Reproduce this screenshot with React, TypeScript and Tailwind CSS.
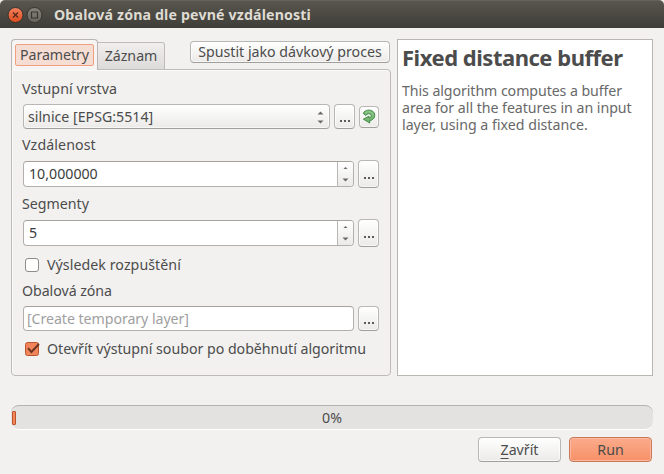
import React from "react";

const raised =
  "box-border rounded-[4px] border border-[#b9b7b3] border-b-[#a19f9b] bg-gradient-to-b from-white to-[#ebeae8] shadow-[inset_0_0_0_1px_rgba(255,255,255,0.6)]";
const field = "box-border rounded-[4px] border border-[#b3b0ab] border-t-[#a5a29d] bg-white";

function Arrow({ down = false, small = false }: { down?: boolean; small?: boolean }) {
  return (
    <svg width="7" height="4" viewBox="0 0 7 4" className="block">
      <path d={down ? "M0.5 0.5h6L3.5 3.5z" : small ? "M1.5 3h4L3.5 1z" : "M0.5 3.5h6L3.5 0.5z"} fill="#6a6865" />
    </svg>
  );
}

function Dots({ tall = false }: { tall?: boolean }) {
  return (
    <button className={`${raised} flex w-[21px] shrink-0 items-end justify-center ${tall ? "h-[28px] pb-[8px]" : "h-[25px] pb-[6px]"}`}>
      <svg width="10" height="2" viewBox="0 0 10 2" fill="#5c5a58">
        <path d="M0 0h2v2H0zM4 0h2v2H4zM8 0h2v2H8z" />
      </svg>
    </button>
  );
}

function Label({ children, className }: { children: React.ReactNode; className: string }) {
  return <div className={`h-[20px] whitespace-nowrap leading-[20px] ${className}`}>{children}</div>;
}

function Spin({ value }: { value: string }) {
  return (
    <div className="flex h-[28px] items-center gap-[4px]">
      <div className={`${field} flex h-[26px] w-[331px] overflow-hidden`}>
        <div className="flex-1 pl-[5px] leading-[23px] text-[#3c3c3c]">{value}</div>
        <div className="flex w-[16px] flex-col items-center justify-between border-l border-[#b9b7b3] bg-gradient-to-b from-white to-[#ebeae8] pt-[4px] pb-[4px]">
          <Arrow small />
          <Arrow down />
        </div>
      </div>
      <Dots tall />
    </div>
  );
}

export default function App() {
  return (
    <div className="flex h-[474px] w-[664px] flex-col overflow-hidden bg-[#f2f1f0] font-['Noto_Sans','Open_Sans',sans-serif] text-[14.2px] text-[#4c4c4c]">
      <header className="flex h-[28px] shrink-0 items-center rounded-t-[5px] border-t border-[#64625a] bg-gradient-to-b from-[#58564e] to-[#3e3d38] pl-[7px]">
        <svg width="36" height="18" viewBox="0 0 36 18" className="shrink-0">
          <defs>
            <linearGradient id="close" x2="0" y2="1">
              <stop stopColor="#f58260" />
              <stop offset="1" stopColor="#df4b1b" />
            </linearGradient>
            <linearGradient id="max" x2="0" y2="1">
              <stop stopColor="#86847b" />
              <stop offset="1" stopColor="#66645c" />
            </linearGradient>
          </defs>
          <circle cx="8.5" cy="9" r="7.5" fill="url(#close)" stroke="#35342f" />
          <path d="M6 6.5l5 5M11 6.5l-5 5" stroke="#54291b" strokeWidth="1.4" />
          <circle cx="27.5" cy="9" r="7.5" fill="url(#max)" stroke="#35342f" />
          <path d="M24.5 6h6v6h-6z" fill="none" stroke="#37362f" strokeWidth="1.2" />
        </svg>
        <h1 className="ml-[11px] whitespace-nowrap text-[14.2px] font-bold tracking-[0.15px] text-[#dfdbd2]">Obalová zóna dle pevné vzdálenosti</h1>
      </header>

      <main className="flex h-[348px] gap-[6px] pt-[11px] pl-[11px]">
        <section className="flex w-[380px] flex-col">
          <div className="z-10 flex h-[31px] items-start">
            <div className="h-[31px] w-[87px] rounded-t-[4px] border border-b-0 border-[#b8b5b2] bg-[#f6f5f4] p-[3px] pt-[4px]">
              <div className="h-[22px] w-[79px] rounded-[2px] border border-[#f0a080] bg-[#f5ddd3] text-center leading-[20px] tracking-[-0.05px] whitespace-nowrap">Parametry</div>
            </div>
            <div className="mt-[3px] h-[28px] w-[67px] rounded-tr-[3px] border border-l-0 border-[#bebbb8] bg-gradient-to-b from-[#f0efed] to-[#dddbd9] text-center leading-[26px]">Záznam</div>
            <button className={`${raised} mt-[2px] ml-[25px] h-[22px] w-[200px] whitespace-nowrap leading-[20px]`}>Spustit jako dávkový proces</button>
          </div>
          <div className="-mt-px flex h-[307px] flex-col rounded-b-[4px] rounded-tr-[4px] border border-[#bebbb8] pt-[9px] pl-[11px] shadow-[inset_1px_1px_0_#fafafa]">
            <Label className="-ml-px tracking-[0.07px]">Vstupní vrstva</Label>
            <div className="mt-[5px] flex h-[25px] items-center gap-[4px]">
              <div className={`${raised} flex h-[25px] w-[307px] items-center justify-between pr-[5px] pl-[4px]`}>
                <span>silnice [EPSG:5514]</span>
                <span className="flex flex-col gap-[5px] pt-[2px]"><Arrow /><Arrow down /></span>
              </div>
              <Dots />
              <button className={`${raised} flex h-[22px] w-[20px] items-center justify-center`}>
                <svg width="14" height="15" viewBox="0 0 14 15" className="shrink-0">
                  <path
                    d="M1.2 4.3C3 .8 8 .2 11 2.5C14.2 5.2 12.8 11.2 7.6 11.6L7.8 14L1.4 10.2L7 7.2L7.2 9C9.5 8.5 9.8 6 8 5C6 4 3.7 6 3.8 6.5Z"
                    fill="#78b875"
                    stroke="#3f8b42"
                    strokeWidth="1"
                    strokeLinejoin="round"
                  />
                  <path d="M3 4.2C6 1.6 10.8 2.5 11 6.2" fill="none" stroke="#a5d3a0" strokeWidth="0.8" />
                </svg>
              </button>
            </div>
            <Label className="mt-[6px] -ml-px tracking-[0.1px]">Vzdálenost</Label>
            <div className="mt-[5px]"><Spin value="10,000000" /></div>
            <Label className="mt-[6px] -ml-px">Segmenty</Label>
            <div className="mt-[5px]"><Spin value="5" /></div>
            <div className="mt-[8px] flex h-[20px] items-center">
              <div className="ml-[2px] h-[14px] w-[14px] rounded-[3px] border border-[#8f8c88] bg-white" />
              <span className="ml-[8px] tracking-[0.06px]">Výsledek rozpuštění</span>
            </div>
            <Label className="mt-[6px] -ml-px tracking-[-0.05px]">Obalová zóna</Label>
            <div className="mt-[5px] flex gap-[4px]">
              <div className={`${field} h-[25px] w-[331px] pl-[3px] leading-[23px] tracking-[-0.06px] text-[#a0a0a0]`}>[Create temporary layer]</div>
              <Dots />
            </div>
            <div className="mt-[8px] flex h-[20px] items-center whitespace-nowrap">
              <svg width="16" height="16" viewBox="0 0 16 16" className="ml-px shrink-0">
                <rect x="1.5" y="1.5" width="13" height="13" rx="2" fill="#f2845b" stroke="#b9562f" />
                <path d="M4 7.2l3.4 3.8L15 3" fill="none" stroke="#6b3423" strokeWidth="2" />
              </svg>
              <span className="ml-[7px] tracking-[-0.02px]">Otevřít výstupní soubor po doběhnutí algoritmu</span>
            </div>
          </div>
        </section>
        <article className="h-[337px] w-[256px] border border-[#b9b6b2] bg-white pt-[2px] pl-[4px]">
          <h2 className="h-[31px] whitespace-nowrap text-[22px] leading-[30px] font-bold tracking-[-0.48px]">Fixed distance buffer</h2>
          <p className="mt-[9px] flex flex-col leading-[17px] whitespace-nowrap text-[#686868]">
            <span className="tracking-[-0.08px]">This algorithm computes a buffer</span>
            <span className="tracking-[-0.04px]">area for all the features in an input</span>
            <span>layer, using a fixed distance.</span>
          </p>
        </article>
      </main>

      <footer className="mt-[29px] flex flex-col pr-[11px] pl-[11px]">
        <div className="flex h-[25px] items-center rounded-[8px] border-t border-b border-t-[#b5b3af] border-b-white bg-[#e3e2e0]">
          <div className="ml-px h-[14px] w-[4px] rounded-[1px] border border-[#b9532e] bg-[#f68557]" />
          <span className="flex-1 pr-[5px] text-center">0%</span>
        </div>
        <div className="mt-[7px] flex justify-end gap-[8px] pr-px">
          <button className={`${raised} h-[25px] w-[83px] leading-[23px]`}><span className="underline decoration-1 underline-offset-[3px]">Z</span>avřít</button>
          <button className="h-[25px] w-[83px] rounded-[4px] border border-[#c87959] bg-gradient-to-b from-[#fbab8c] to-[#f69067] leading-[23px] shadow-[inset_0_0_0_1px_#ffb89d]">Run</button>
        </div>
      </footer>
    </div>
  );
}
